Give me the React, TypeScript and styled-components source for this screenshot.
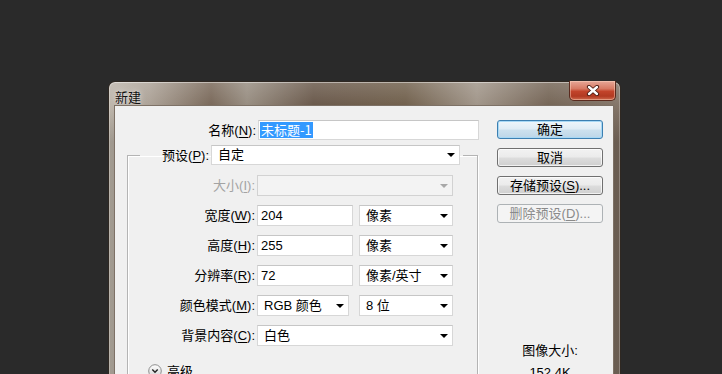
import React from 'react';
import styled, { createGlobalStyle, css } from 'styled-components';

const GlobalStyle = createGlobalStyle`
  html, body {
    margin: 0;
    padding: 0;
    background: #2a2a2a;
    overflow: hidden;
  }
  body {
    height: 374px;
    font-family: "Liberation Sans", "Noto Sans CJK SC", sans-serif;
    font-size: 13px;
    color: #000;
  }
`;

const Desktop = styled.div`
  height: 374px;
  padding: 81px 0 0 108px;
  box-sizing: border-box;
  overflow: hidden;
`;

const Window = styled.div`
  width: 513px;
  height: 320px;
  box-sizing: border-box;
  border: 1px solid #2f2822;
  border-bottom: none;
  border-radius: 7px 7px 0 0;
  padding: 0 6px 0 5px;
  display: flex;
  flex-direction: column;
  background:
    linear-gradient(180deg, rgba(255, 255, 255, 0.22) 0px, rgba(255, 255, 255, 0.05) 28px, rgba(0, 0, 0, 0.12) 60px),
    linear-gradient(90deg, #b8b0a5 0%, #a59a8e 8%, #6f5d4d 20%, #8f8477 27%, #5e4c3d 40%, #66543f 58%, #998d80 72%, #6a5949 86%, #7a6b5e 100%);
  box-shadow: inset 0 1px 0 rgba(255, 255, 255, 0.45), inset 1px 0 0 rgba(255, 255, 255, 0.25), inset -1px 0 0 rgba(255, 255, 255, 0.25);
`;

const TitleBar = styled.div`
  height: 28px;
  display: flex;
  justify-content: space-between;
  align-items: flex-start;
`;

const Title = styled.div`
  padding: 6px 0 0 1px;
  font-family: "Noto Sans CJK SC", sans-serif;
  font-size: 13px;
  line-height: 17px;
  color: #111;
  text-shadow: 0 0 6px rgba(255, 255, 255, 0.7), 0 0 2px rgba(255, 255, 255, 0.5);
`;

const CloseButton = styled.div`
  width: 47px;
  height: 20px;
  margin: -1px -2px 0 0;
  box-sizing: border-box;
  border: 1px solid #5a2a1e;
  border-top: none;
  border-radius: 0 0 5px 5px;
  background: linear-gradient(180deg, #e7a797 0%, #d77a64 40%, #c2432a 55%, #b23a22 80%, #cf6a4e 100%);
  box-shadow: inset 0 0 0 1px rgba(255, 220, 200, 0.45);
  display: flex;
  align-items: center;
  justify-content: center;
`;

const Client = styled.div`
  flex: 1;
  display: flex;
  background: #f0f0f0;
  border: 1px solid #7d7166;
  padding: 14px 10px 0 0;
`;

const LeftCol = styled.div`
  width: 375px;
  display: flex;
  flex-direction: column;
`;

const Row = styled.div<{ $labelWidth: number }>`
  display: flex;
  align-items: center;
  height: 20px;
  gap: 2px;
  & > label {
    width: ${(p) => p.$labelWidth}px;
  }
`;

const Label = styled.label<{ $disabled?: boolean }>`
  flex: none;
  text-align: right;
  font-family: "Noto Sans CJK SC", sans-serif;
  font-size: 13px;
  line-height: 16px;
  white-space: nowrap;
  color: ${(p) => (p.$disabled ? '#a3a3a3' : '#000')};
`;

const U = styled.span`
  font-family: "Liberation Sans", sans-serif;
  text-decoration: underline;
  text-underline-offset: 2px;
`;

const Paren = styled.span`
  font-family: "Liberation Sans", sans-serif;
`;

const fieldBox = css`
  box-sizing: border-box;
  height: 20px;
  background: #fff;
  border: 1px solid #d7d7d7;
  border-top-color: #c6c6c6;
  display: flex;
  align-items: center;
  font-family: "Liberation Sans", "Noto Sans CJK SC", sans-serif;
  font-size: 13px;
  line-height: 16px;
  white-space: nowrap;
`;

const TextBox = styled.div<{ $width: number }>`
  ${fieldBox};
  width: ${(p) => p.$width}px;
  padding-left: 3px;
`;

const NameBox = styled(TextBox)`
  padding-left: 1px;
`;

const Selected = styled.span`
  background: #3399ff;
  color: #fff;
  padding: 0 1px;
  font-family: "Noto Sans CJK SC", sans-serif;
`;

const Combo = styled.div<{ $width: number; $disabled?: boolean }>`
  ${fieldBox};
  width: ${(p) => p.$width}px;
  padding: 0 4px 0 6px;
  ${(p) =>
    p.$disabled &&
    css`
      background: #f3f3f3;
      border-color: #d2d2d2;
    `}
`;

const ComboText = styled.span`
  flex: 1;
`;

const Arrow = styled.span<{ $disabled?: boolean }>`
  width: 0;
  height: 0;
  border-left: 4px solid transparent;
  border-right: 4px solid transparent;
  border-top: 4px solid ${(p) => (p.$disabled ? '#a8a8a8' : '#000')};
`;

const GroupBox = styled.fieldset`
  margin: 5px 0 0 12px;
  padding: 0 0 40px 0;
  width: 351px;
  box-sizing: border-box;
  border: 1px solid #b4b4b4;
  box-shadow: inset 1px 1px 0 #fff, 1px 1px 0 #fff;
  min-width: 0;
`;

const Legend = styled.legend`
  margin-left: 12px;
  padding: 0 3px 0 1px;
  display: flex;
  align-items: center;
  gap: 2px;
  height: 20px;
`;

const FieldRows = styled.div`
  display: flex;
  flex-direction: column;
  gap: 9px;
  padding-top: 10px;
`;

const FieldRow = styled.div`
  display: flex;
  align-items: center;
  height: 21px;
  & > label {
    width: 127px;
    margin-right: 2px;
  }
`;

const Pair = styled.div<{ $gap: number }>`
  display: flex;
  gap: ${(p) => p.$gap}px;
  height: 21px;
  & > div {
    height: 21px;
  }
`;

const FullCombo = styled(Combo)`
  height: 21px;
`;

const Advanced = styled.div`
  display: flex;
  align-items: center;
  gap: 5px;
  margin: 17px 0 0 20px;
  font-family: "Noto Sans CJK SC", sans-serif;
  font-size: 13px;
  line-height: 16px;
`;

const RightCol = styled.div`
  margin-left: auto;
  width: 106px;
  display: flex;
  flex-direction: column;
  gap: 9px;
`;

const Button = styled.div<{ $variant?: 'default' | 'disabled' }>`
  height: 19px;
  box-sizing: border-box;
  border: 1px solid #707070;
  border-radius: 3px;
  background: linear-gradient(180deg, #f2f2f2 0%, #ebebeb 48%, #dddddd 52%, #cfcfcf 100%);
  box-shadow: inset 0 0 0 1px rgba(255, 255, 255, 0.7);
  display: flex;
  align-items: center;
  justify-content: center;
  font-family: "Liberation Sans", "Noto Sans CJK SC", sans-serif;
  font-size: 13px;
  line-height: 16px;
  color: #000;
  white-space: nowrap;
  ${(p) =>
    p.$variant === 'default' &&
    css`
      border-color: #3c7fb1;
      background: linear-gradient(180deg, #eef6fb 0%, #dfecf5 48%, #cde1ee 52%, #bcd6e8 100%);
      box-shadow: inset 0 0 0 1px #a7d8f5;
    `}
  ${(p) =>
    p.$variant === 'disabled' &&
    css`
      border-color: #adb2b5;
      background: #f4f4f4;
      box-shadow: none;
      color: #8a8a8a;
    `}
`;

const SizeInfo = styled.div`
  margin-top: 111px;
  display: flex;
  flex-direction: column;
  align-items: center;
  gap: 6px;
  font-family: "Liberation Sans", "Noto Sans CJK SC", sans-serif;
  font-size: 13px;
  line-height: 16px;
`;

const CloseGlyph = () => (
  <svg width="14" height="11" viewBox="0 0 14 11">
    <path d="M3 2 L11 9 M11 2 L3 9" stroke="#4a1a10" strokeWidth="4.2" strokeLinecap="round" />
    <path d="M3 2 L11 9 M11 2 L3 9" stroke="#fff" strokeWidth="2.4" strokeLinecap="round" />
  </svg>
);

const ExpandGlyph = () => (
  <svg width="14" height="14" viewBox="0 0 14 14">
    <defs>
      <linearGradient id="adv" x1="0" y1="0" x2="0" y2="1">
        <stop offset="0" stopColor="#ffffff" />
        <stop offset="1" stopColor="#d4d4d4" />
      </linearGradient>
    </defs>
    <circle cx="7" cy="7" r="6.3" fill="url(#adv)" stroke="#8e8e8e" strokeWidth="1" />
    <path d="M4.3 5.5 L7 8.3 L9.7 5.5" fill="none" stroke="#222" strokeWidth="1.4" />
  </svg>
);

const Mn = ({ text, k }: { text: string; k: string }) => (
  <>
    {text}
    <Paren>(</Paren>
    <U>{k}</U>
    <Paren>):</Paren>
  </>
);

export default function App() {
  return (
    <>
      <GlobalStyle />
      <Desktop>
        <Window>
          <TitleBar>
            <Title>新建</Title>
            <CloseButton>
              <CloseGlyph />
            </CloseButton>
          </TitleBar>
          <Client>
            <LeftCol>
              <Row $labelWidth={141}>
                <Label>
                  <Mn text="名称" k="N" />
                </Label>
                <NameBox $width={221}>
                  <Selected>未标题-1</Selected>
                </NameBox>
              </Row>
              <GroupBox>
                <Legend>
                  <Label style={{ width: 68 }}>
                    <Mn text="预设" k="P" />
                  </Label>
                  <Combo $width={249}>
                    <ComboText>自定</ComboText>
                    <Arrow />
                  </Combo>
                </Legend>
                <FieldRows>
                  <FieldRow>
                    <Label $disabled>
                      <Mn text="大小" k="I" />
                    </Label>
                    <FullCombo $width={196} $disabled>
                      <ComboText />
                      <Arrow $disabled />
                    </FullCombo>
                  </FieldRow>
                  <FieldRow>
                    <Label>
                      <Mn text="宽度" k="W" />
                    </Label>
                    <Pair $gap={6}>
                      <TextBox $width={96}>204</TextBox>
                      <Combo $width={94}>
                        <ComboText>像素</ComboText>
                        <Arrow />
                      </Combo>
                    </Pair>
                  </FieldRow>
                  <FieldRow>
                    <Label>
                      <Mn text="高度" k="H" />
                    </Label>
                    <Pair $gap={6}>
                      <TextBox $width={96}>255</TextBox>
                      <Combo $width={94}>
                        <ComboText>像素</ComboText>
                        <Arrow />
                      </Combo>
                    </Pair>
                  </FieldRow>
                  <FieldRow>
                    <Label>
                      <Mn text="分辨率" k="R" />
                    </Label>
                    <Pair $gap={6}>
                      <TextBox $width={96}>72</TextBox>
                      <Combo $width={94}>
                        <ComboText>像素/英寸</ComboText>
                        <Arrow />
                      </Combo>
                    </Pair>
                  </FieldRow>
                  <FieldRow>
                    <Label>
                      <Mn text="颜色模式" k="M" />
                    </Label>
                    <Pair $gap={10}>
                      <Combo $width={92}>
                        <ComboText>RGB 颜色</ComboText>
                        <Arrow />
                      </Combo>
                      <Combo $width={94}>
                        <ComboText>8 位</ComboText>
                        <Arrow />
                      </Combo>
                    </Pair>
                  </FieldRow>
                  <FieldRow>
                    <Label>
                      <Mn text="背景内容" k="C" />
                    </Label>
                    <FullCombo $width={196}>
                      <ComboText>白色</ComboText>
                      <Arrow />
                    </FullCombo>
                  </FieldRow>
                </FieldRows>
                <Advanced>
                  <ExpandGlyph />
                  高级
                </Advanced>
              </GroupBox>
            </LeftCol>
            <RightCol>
              <Button $variant="default">确定</Button>
              <Button>取消</Button>
              <Button>
                存储预设<Paren>(</Paren>
                <U>S</U>
                <Paren>)...</Paren>
              </Button>
              <Button $variant="disabled">
                删除预设<Paren>(</Paren>
                <U>D</U>
                <Paren>)...</Paren>
              </Button>
              <SizeInfo>
                <span>图像大小:</span>
                <span>152.4K</span>
              </SizeInfo>
            </RightCol>
          </Client>
        </Window>
      </Desktop>
    </>
  );
}
